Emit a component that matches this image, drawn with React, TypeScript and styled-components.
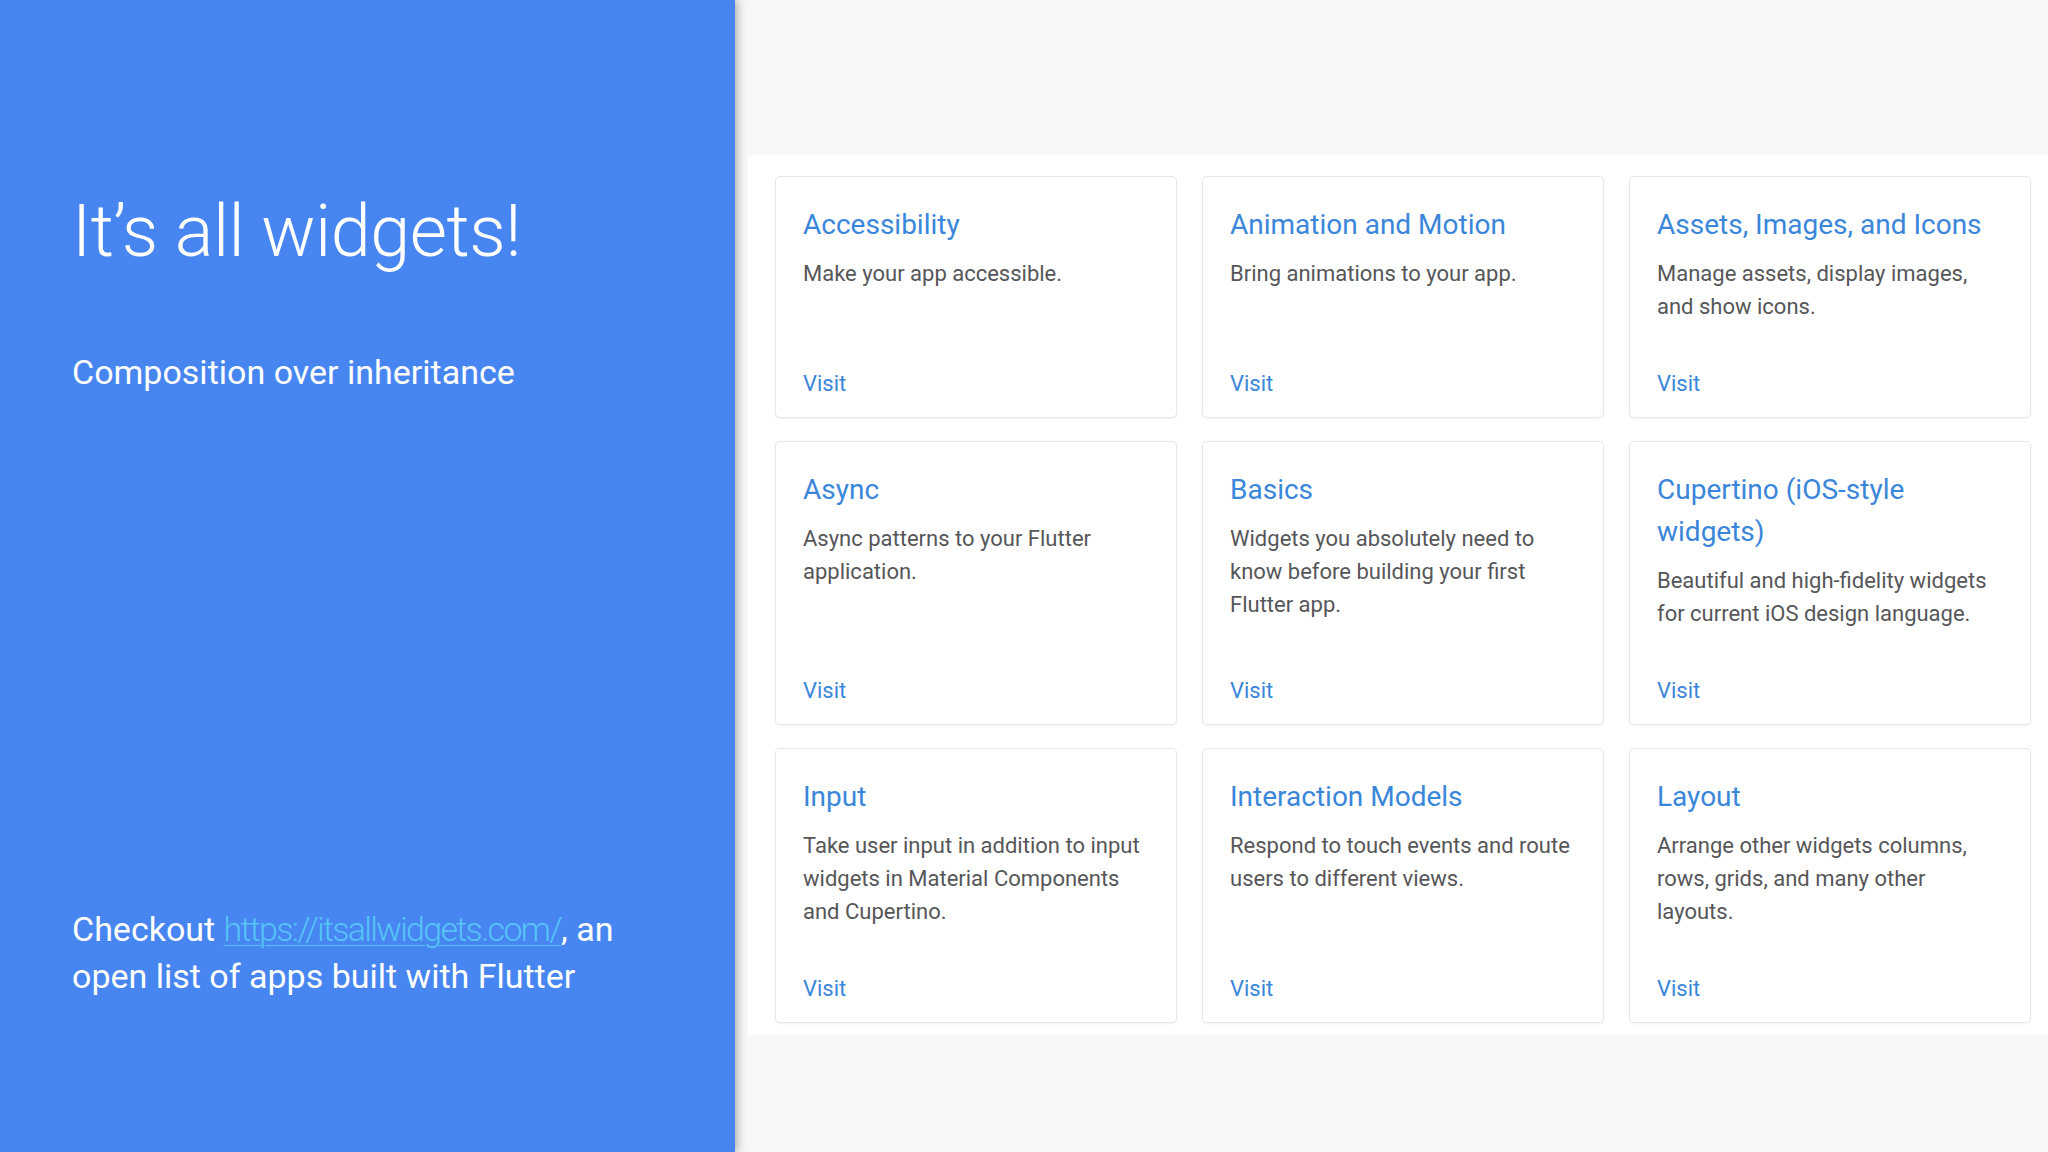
import styled, { createGlobalStyle } from "styled-components";

const GlobalStyle = createGlobalStyle`
  html, body {
    margin: 0;
    padding: 0;
  }
  body {
    font-family: Roboto, "Liberation Sans", sans-serif;
    -webkit-font-smoothing: antialiased;
  }
`;

const Slide = styled.div`
  display: grid;
  grid-template-columns: 735px 1fr;
  width: 2048px;
  height: 1152px;
  overflow: hidden;
  background: #f7f7f8;
`;

const Sidebar = styled.aside`
  position: relative;
  z-index: 1;
  display: flex;
  flex-direction: column;
  padding: 190px 40px 152px 72px;
  background: #4786f1;
  color: #ffffff;
  box-shadow: 3px 0 8px rgba(0, 0, 0, 0.28);
`;

const Title = styled.h1`
  margin: 0;
  font-size: 72px;
  font-weight: 300;
  line-height: 84px;
  letter-spacing: -0.5px;
`;

const Subtitle = styled.p`
  margin: 79px 0 0;
  font-size: 34px;
  font-weight: 400;
  line-height: 38px;
`;

const Footnote = styled.p`
  margin: auto 0 0;
  font-size: 34px;
  font-weight: 400;
  line-height: 47px;
`;

const Link = styled.a`
  color: #56c4f6;
  font-weight: 300;
  letter-spacing: -1.7px;
  text-decoration: underline;
  text-decoration-thickness: 1px;
  text-underline-offset: 4px;
`;

const Screenshot = styled.section`
  padding-top: 155px;
  display: flex;
  flex-direction: column;
`;

const CatalogPanel = styled.div`
  margin-left: 13px;
  padding: 21px 0 12px 27px;
  background: #ffffff;
  display: grid;
  grid-template-columns: repeat(3, 402px);
  gap: 23px 25px;
  align-content: start;
`;

const Card = styled.article`
  display: flex;
  flex-direction: column;
  padding: 27px 30px 17px 27px;
  border: 1px solid #e7e7ea;
  border-radius: 5px;
  background: #ffffff;
  box-shadow: 0 1px 3px rgba(0, 0, 0, 0.05);
`;

const CardTitle = styled.h2`
  margin: 0;
  font-size: 28px;
  font-weight: 400;
  line-height: 42px;
  color: #3a86da;
`;

const CardText = styled.p`
  margin: 11px 0 44px;
  font-size: 22px;
  line-height: 33px;
  color: #565659;
`;

const Visit = styled.a`
  margin-top: auto;
  font-size: 22px;
  line-height: 33px;
  color: #3a86da;
  text-decoration: none;
`;

type Topic = { title: string; text: string };

const topics: Topic[] = [
  { title: "Accessibility", text: "Make your app accessible." },
  { title: "Animation and Motion", text: "Bring animations to your app." },
  { title: "Assets, Images, and Icons", text: "Manage assets, display images, and show icons." },
  { title: "Async", text: "Async patterns to your Flutter application." },
  { title: "Basics", text: "Widgets you absolutely need to know before building your first Flutter app." },
  { title: "Cupertino (iOS-style widgets)", text: "Beautiful and high-fidelity widgets for current iOS design language." },
  { title: "Input", text: "Take user input in addition to input widgets in Material Components and Cupertino." },
  { title: "Interaction Models", text: "Respond to touch events and route users to different views." },
  { title: "Layout", text: "Arrange other widgets columns, rows, grids, and many other layouts." },
];

export default function App() {
  return (
    <>
      <GlobalStyle />
      <Slide>
        <Sidebar>
          <Title>It’s all widgets!</Title>
          <Subtitle>Composition over inheritance</Subtitle>
          <Footnote>
            Checkout <Link href="#">https://itsallwidgets.com/</Link>, an
            <br />
            open list of apps built with Flutter
          </Footnote>
        </Sidebar>
        <Screenshot>
          <CatalogPanel>
            {topics.map((t) => (
              <Card key={t.title}>
                <CardTitle>{t.title}</CardTitle>
                <CardText>{t.text}</CardText>
                <Visit href="#">Visit</Visit>
              </Card>
            ))}
          </CatalogPanel>
        </Screenshot>
      </Slide>
    </>
  );
}
